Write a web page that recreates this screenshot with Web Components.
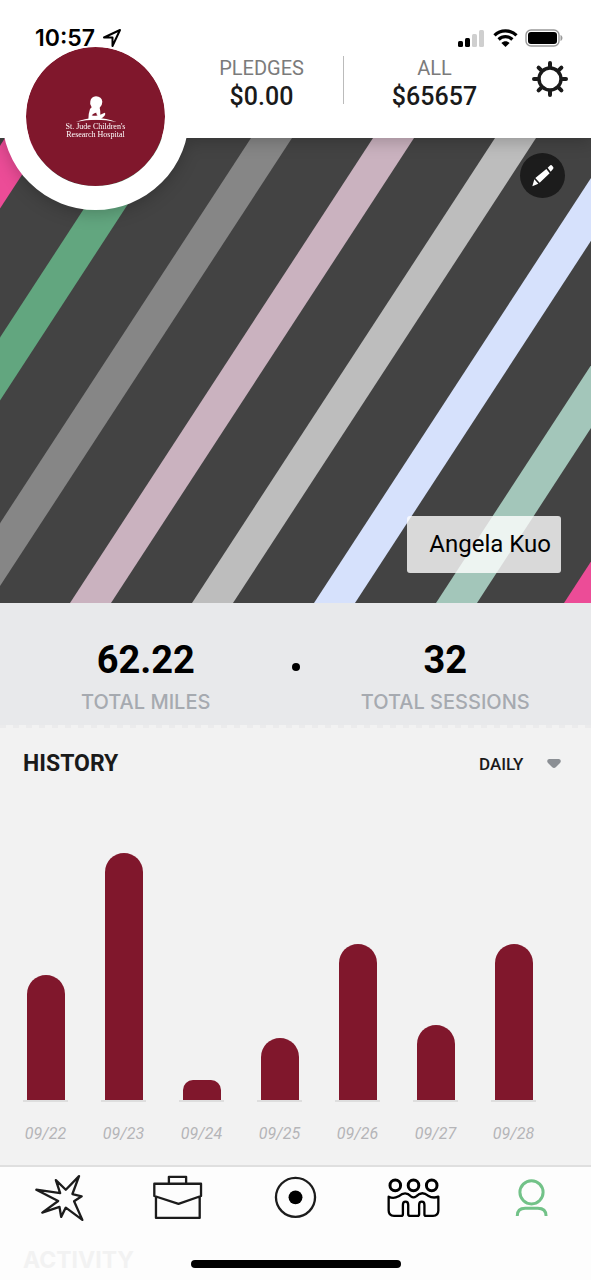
<!DOCTYPE html>
<html lang="en">
<head>
<meta charset="utf-8">
<meta name="viewport" content="width=device-width, initial-scale=1">
<title>Profile</title>
<style>
  :root {
    --brand: #80172c;
    --ink: #1a1a1a;
    --muted: #7b7b7b;
    --ui-font: Roboto, "Liberation Sans", sans-serif;
    --system-font: Inter, "Liberation Sans", sans-serif;
  }

  body {
    margin: 0;
    background: #f2f2f2;
    color: var(--ink);
    font-family: var(--ui-font);
  }
</style>
</head>
<body>
<profile-page></profile-page>

<script>
const define = (name, template) => {
  customElements.define(name, class extends HTMLElement {
    constructor() {
      super()
      this.attachShadow({ mode: 'open' }).innerHTML = template(this)
    }
  })
}

define('status-bar', () => /*html*/ `
<style>
  :host {
    display: flex;
    align-items: center;
    justify-content: space-between;
    position: relative;
    z-index: 2;
    height: 32px;
    padding: 22px 28px 0 35px;
    font: 600 23px/32px var(--system-font);
    color: #000;
  }

  div {
    display: flex;
    align-items: center;
    gap: 7px;
  }

  svg {
    display: block;
  }
</style>
<div>
  <time>10:57</time>
  <svg width="20" height="20" viewBox="0 0 20 20" fill="none" stroke="#000" stroke-width="2" stroke-linejoin="round"><path d="M2 9.500 18 2 10.500 18V9.500Z"/></svg>
</div>
<div>
  <svg width="28" height="18" viewBox="0 0 28 18">
    <rect x="0" y="12" width="5" height="6" rx="1.500"/>
    <rect x="7" y="9" width="5" height="9" rx="1.500"/>
    <g fill="#cfcfcf"><rect x="14" y="5" width="5" height="13" rx="1.500"/><rect x="21" y="1" width="5" height="17" rx="1.500"/></g>
  </svg>
  <svg width="25" height="18" viewBox="0 0 25 18" fill="none" stroke="#000" stroke-width="3.200">
    <path d="M1.500 6.300C7.500.4 17.500.4 23.500 6.300M5.600 10.500c4-3.800 9.800-3.800 13.800 0"/>
    <path d="M12.500 18 8.400 14c2.400-2.200 5.800-2.200 8.200 0z" fill="#000" stroke="none"/>
  </svg>
  <svg width="38" height="18" viewBox="0 0 38 18">
    <rect x="1" y="1" width="33" height="16" rx="5" fill="none" stroke="#999" stroke-width="1.400"/>
    <rect x="3" y="3" width="29" height="12" rx="3"/>
    <path d="M35.500 6c2.600.7 2.600 5.300 0 6z" fill="#999"/>
  </svg>
</div>
`)

define('charity-badge', () => /*html*/ `
<style>
  :host {
    display: flex;
    flex-flow: column;
    align-items: center;
    justify-content: center;
    gap: 1px;
    box-sizing: border-box;
    width: 187px;
    height: 187px;
    border: 24px solid #fff;
    border-radius: 50%;
    background: var(--brand) padding-box;
    color: #fff;
    font: 400 8px/8px "Liberation Serif", serif;
    text-align: center;
  }

  svg {
    display: block;
  }
</style>
<svg width="42" height="27" viewBox="224 280 126 81" fill="#fff">
  <path d="M227 361Q287 337 348 361Q287 347 227 361Z"/>
  <path d="M264 354Q264 336 269 322L274 317Q267 309 270 299Q272 285 287 284Q304 285 306 300Q306 311 298 318Q300 325 300 339L313 333Q317 335 312 343Q306 349 297 354Z"/>
  <path d="M274 341Q282 332 288 333Q287 338 292 341Q283 344 274 341Z" fill="#80172c"/>
</svg>
<span><slot></slot></span>
`)

define('money-total', el => /*html*/ `
<style>
  :host {
    display: flex;
    flex-flow: column;
    align-items: center;
    font: 500 25px/30px var(--ui-font);
  }

  .label {
    color: var(--muted);
    font: 400 20px/28px var(--ui-font);
  }
</style>
<span class="label">${el.getAttribute('label')}</span>
<span><slot></slot></span>
`)

define('profile-header', () => /*html*/ `
<style>
  :host {
    display: block;
    position: relative;
    z-index: 1;
    height: 138px;
    background: #fff;
    filter: drop-shadow(0 4px 8px rgba(0,0,0,.2));
  }

  /* hangs over the hero below the header */
  charity-badge {
    position: absolute;
    top: 23px;
    left: 2px;
  }

  .totals {
    display: grid;
    grid-template-columns: 180fr 163fr 1px 181fr 66fr;
    align-items: start;
  }

  money-total {
    grid-column: 2;
  }

  .divider + money-total {
    grid-column: 4;
  }

  .divider {
    height: 48px;
    margin-top: 2px;
    background: #bbb;
  }

  button {
    display: block;
    justify-self: start;
    margin: 4px 0 0 4px;
    padding: 2px;
    border: 0;
    background: none;
  }

  svg {
    display: block;
  }
</style>
<status-bar></status-bar>
<charity-badge>St. Jude Children's<br>Research Hospital</charity-badge>
<div class="totals">
  <money-total label="PLEDGES">$0.00</money-total>
  <span class="divider"></span>
  <money-total label="ALL">$65657</money-total>
  <button aria-label="Settings">
    <svg width="38" height="38" viewBox="-19 -19 38 38" fill="none" stroke="#1a1a1a" stroke-width="4" stroke-linecap="round">
      <circle r="11" stroke-width="3.400"/>
      <path d="M0-12.500V-16M0 12.500V16M-12.500 0H-16M12.500 0H16M8.900-8.900l2.500-2.500M-8.900-8.900l-2.500-2.500M8.900 8.900l2.500 2.500M-8.900 8.900l-2.500 2.500"/>
    </svg>
  </button>
</div>
`)

// left edge of each stripe along the top of the artwork
const stripes = [
  [5, '#ec4c97'],
  [130, '#62a67f'],
  [251, '#868686'],
  [373, '#cab2bf'],
  [495, '#bdbdbd'],
  [617, '#d6e1fc'],
  [739, '#a3c6ba'],
  [867, '#ec4c97']
]

const stripe = ([x, color]) =>
  `<path d="M${x} 0h41l-303 465h-41z" fill="${color}"/>`

define('profile-hero', () => /*html*/ `
<style>
  :host {
    display: grid;
    height: 465px;
    background: #434343;
    overflow: hidden;
  }

  .art, .content {
    grid-area: 1 / 1;
  }

  .art {
    display: block;
    width: 100%;
    height: 465px;
  }

  .content {
    display: flex;
    flex-flow: column;
    align-items: flex-end;
    justify-content: space-between;
    padding: 15px 26px 30px;
  }

  button {
    display: grid;
    place-items: center;
    width: 45px;
    height: 45px;
    padding: 0;
    border: 0;
    border-radius: 50%;
    background: #1c1c1c;
  }

  .name {
    margin-right: 4px;
    padding: 0 10px 0 22px;
    border-radius: 3px;
    background: rgba(255,255,255,.8);
    color: #000;
    font: 400 24px/57px var(--ui-font);
  }
</style>
<svg class="art" viewBox="0 0 591 465" preserveAspectRatio="none" aria-hidden="true">
  ${stripes.map(stripe).join('')}
</svg>
<div class="content">
  <button aria-label="Edit cover">
    <svg width="24" height="24" viewBox="692 492 72 72" fill="#fff">
      <path d="M742 503l8-7q3-2 6 2l3 4q1 3-1 5l-7 8zM738 507l10 13-30 28-13-14zM702 538l12 13-18 8z"/>
    </svg>
  </button>
  <span class="name"><slot></slot></span>
</div>
`)

define('stat-figure', el => /*html*/ `
<style>
  :host {
    display: flex;
    flex-flow: column;
    align-items: center;
    color: #000;
    font: 700 38px/48px var(--ui-font);
  }

  .label {
    color: #a6aab0;
    font: 500 20px/36px var(--system-font);
  }
</style>
<span><slot></slot></span>
<span class="label">${el.getAttribute('label')}</span>
`)

define('profile-stats', () => /*html*/ `
<style>
  :host {
    display: grid;
    grid-template-columns: 1fr 8px 1fr;
    height: 89px;
    padding-top: 33px;
    background: #e8e9eb;
  }

  .dot {
    width: 8px;
    height: 8px;
    margin-top: 27px;
    border-radius: 50%;
    background: #000;
  }
</style>
<stat-figure label="TOTAL MILES">62.22</stat-figure>
<span class="dot"></span>
<stat-figure label="TOTAL SESSIONS">32</stat-figure>
`)

define('chart-bar', el => /*html*/ `
<style>
  :host {
    display: flex;
    flex-flow: column;
    align-items: center;
    width: 45px;
  }

  .bar {
    width: 38px;
    height: ${el.getAttribute('value')}px;
    border-radius: ${el.getAttribute('value') < 30 ? 10 : 19}px ${el.getAttribute('value') < 30 ? 10 : 19}px 0 0;
    background: var(--brand);
  }

  .label {
    width: 45px;
    padding-top: 20px;
    border-top: 2px solid #dedede;
    color: #b5b5b8;
    font: italic 400 16px/24px var(--ui-font);
    text-align: center;
  }
</style>
<span class="bar"></span>
<span class="label"><slot></slot></span>
`)

const history = [
  ['09/22', 125],
  ['09/23', 247],
  ['09/24', 20],
  ['09/25', 62],
  ['09/26', 156],
  ['09/27', 75],
  ['09/28', 156]
]

define('history-chart', () => /*html*/ `
<style>
  :host {
    display: block;
    background: #f2f2f2;
  }

  .perforation {
    height: 3px;
    background: repeating-linear-gradient(90deg, #ebebec 0 6px, transparent 6px 13px);
  }

  header {
    display: flex;
    align-items: center;
    justify-content: space-between;
    padding: 20px 30px 0 23px;
  }

  h2 {
    margin: 0;
    font: 700 23px/32px var(--ui-font);
  }

  label {
    display: flex;
    align-items: center;
    gap: 23px;
  }

  select {
    appearance: none;
    padding: 0;
    border: 0;
    background: none;
    color: var(--ink);
    font: 500 17px/32px var(--ui-font);
  }

  .bars {
    display: flex;
    align-items: flex-end;
    justify-content: space-between;
    height: 366px;
    padding: 0 55px 19px 23px;
  }
</style>
<div class="perforation"></div>
<header>
  <h2>HISTORY</h2>
  <label>
    <select aria-label="Period"><option>DAILY</option></select>
    <svg width="14" height="10" viewBox="0 0 14 10" fill="#8b8f94"><path d="M2 0h10q3 1 1 4L9 8Q7 10 5 8L1 4Q-1 1 2 0z"/></svg>
  </label>
</header>
<div class="bars">
  ${history.map(([day, value]) => `<chart-bar value="${value}">${day}</chart-bar>`).join('')}
</div>
`)

define('tab-bar', () => /*html*/ `
<style>
  :host {
    display: block;
    border-top: 2px solid #dfdfdf;
    background: #fdfdfd;
  }

  nav {
    display: grid;
    grid-template-columns: repeat(5, 1fr);
    padding-top: 6px;
  }

  a {
    display: grid;
    place-items: center;
    color: #1c1c1c;
  }

  a[aria-current] {
    color: #72c288;
  }

  svg {
    display: block;
    fill: none;
    stroke: currentColor;
    stroke-width: 7;
    stroke-linejoin: round;
    stroke-linecap: round;
  }

  .peek {
    display: grid;
    grid-template-columns: 1fr 210px 1fr;
    align-items: center;
    height: 57px;
  }

  h2 {
    margin: 0 0 0 23px;
    padding-top: 16px;
    color: #f2f2f2;
    font: 700 23px/32px var(--system-font);
  }

  .home {
    height: 8px;
    margin-top: 25px;
    border-radius: 4px;
    background: #000;
  }
</style>
<nav>
  <a href="#feed" aria-label="Feed">
    <svg width="53" height="50" viewBox="100 70 160 150"><path d="M110 120 182 130 169 91 199 120 239 79 219 133 247 140 224 155 249 211 199 174 185 202 180 172 128 189 176 154Z"/></svg>
  </a>
  <a href="#work" aria-label="Work">
    <svg width="53" height="50" viewBox="452 70 160 150"><path d="M462 102H603V139L535 163 462 139ZM467 142V205H599V142M506 100V81H558V100"/></svg>
  </a>
  <a href="#start" aria-label="Start">
    <svg width="53" height="50" viewBox="805 70 160 150"><circle cx="885" cy="143" r="59"/><circle cx="885" cy="143" r="21" fill="#000" stroke="none"/></svg>
  </a>
  <a href="#teams" aria-label="Teams">
    <svg width="53" height="50" viewBox="262 70 160 150" style="stroke:#000">
      <g stroke-width="9"><circle cx="287" cy="107" r="16"/><circle cx="342" cy="107" r="16"/><circle cx="397" cy="107" r="16"/></g>
      <path d="M267 141Q281 149 297 140Q318 122 334 140Q342 146 350 140Q367 122 386 138Q401 147 417 141V183Q417 199 401 199H379Q375 199 375 194V166Q375 156 367 156Q359 156 359 166V194Q359 199 354 199H332Q326 199 326 194V166Q326 156 318 156Q310 156 310 166V194Q310 199 305 199H283Q267 199 267 183Z"/>
    </svg>
  </a>
  <a href="#profile" aria-label="Profile" aria-current="page">
    <svg width="53" height="50" viewBox="615 70 160 150" style="stroke-width:9;stroke-linecap:butt"><circle cx="695" cy="128" r="35"/><path d="M652 199Q652 176 676 176H714Q739 176 739 199"/></svg>
  </a>
</nav>
<div class="peek">
  <h2>ACTIVITY</h2>
  <span class="home"></span>
</div>
`)

define('profile-page', () => /*html*/ `
<style>
  :host {
    display: block;
  }
</style>
<profile-header></profile-header>
<main>
  <profile-hero>Angela Kuo</profile-hero>
  <profile-stats></profile-stats>
  <history-chart></history-chart>
</main>
<tab-bar></tab-bar>
`)
</script>
</body>
</html>
